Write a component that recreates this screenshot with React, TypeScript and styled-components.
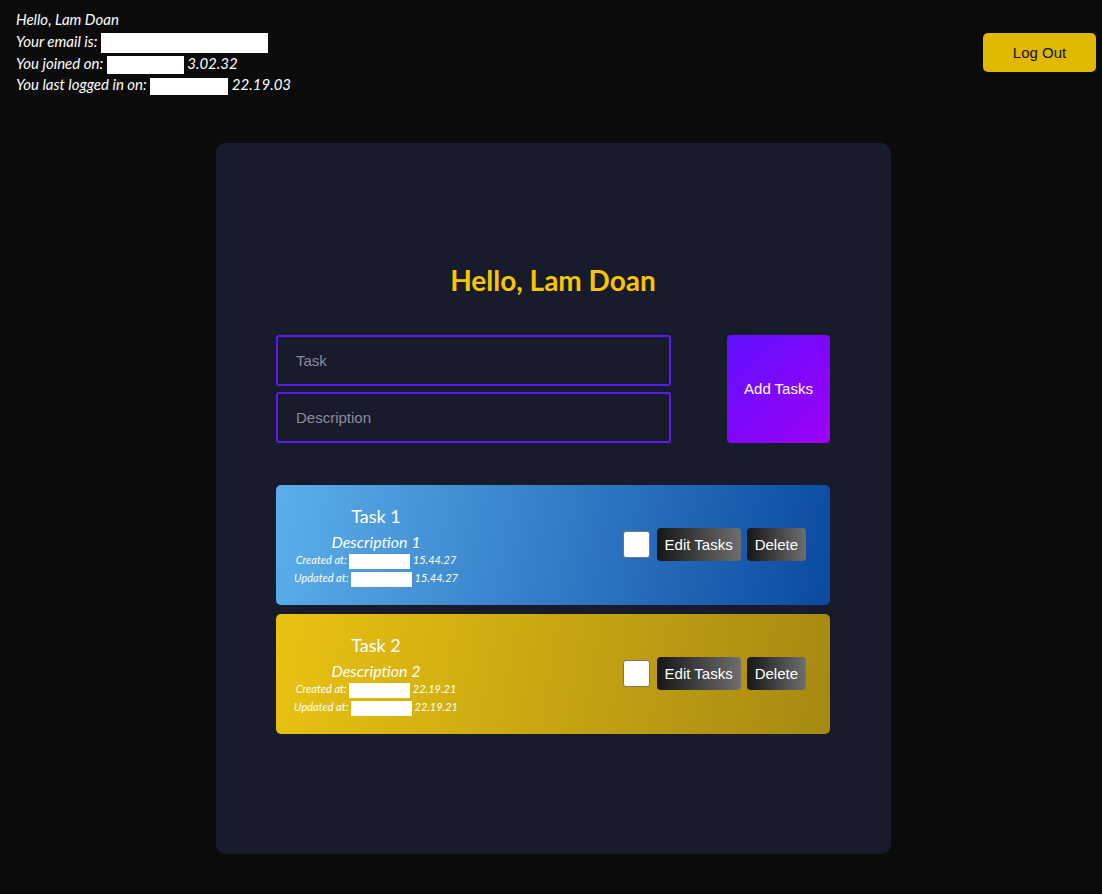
import React from "react";
import styled, { createGlobalStyle } from "styled-components";

const Global = createGlobalStyle`
  html, body { margin: 0; padding: 0; background: #0b0b0b; }
  body { font-family: "Segoe UI", Lato, "Noto Sans", sans-serif; color: #fff; }
  * { box-sizing: border-box; }
`;

const Page = styled.div`
  min-height: 894px;
  background: #0b0b0b;
  display: flex;
  flex-direction: column;
`;

const TopBar = styled.header`
  display: flex;
  justify-content: space-between;
  align-items: flex-start;
  padding: 9px 6px 0 16px;
`;

const UserInfo = styled.div`
  display: flex;
  flex-direction: column;
`;

const InfoLine = styled.p`
  margin: 0;
  font-size: 15px;
  font-style: italic;
  line-height: 21.5px;
  color: #fff;
  white-space: nowrap;
`;

const Redact = styled.span<{ $w: number; $h: number }>`
  display: inline-block;
  width: ${(p) => p.$w}px;
  height: ${(p) => p.$h}px;
  background: #fff;
  vertical-align: middle;
`;

const LogOut = styled.button`
  margin-top: 24px;
  width: 113px;
  height: 39px;
  background: #e0b800;
  border: none;
  border-radius: 5px;
  color: #111;
  font-family: "Liberation Sans", Arial, sans-serif;
  font-size: 15px;
  cursor: pointer;
`;

const Center = styled.main`
  display: flex;
  justify-content: center;
  padding-left: 5px;
  margin-top: 47px;
`;

const Card = styled.section`
  width: 675px;
  height: 711px;
  background: #181b2c;
  border-radius: 10px;
  padding: 2px 61px 0 60px;
  display: flex;
  flex-direction: column;
  justify-content: center;
`;

const Heading = styled.h1`
  margin: 0 0 39px;
  text-align: center;
  color: #f7c600;
  font-size: 28px;
  font-weight: 700;
  line-height: 31px;
`;

const Form = styled.form`
  display: flex;
  gap: 56px;
  margin-bottom: 42px;
`;

const Inputs = styled.div`
  width: 395px;
  display: flex;
  flex-direction: column;
  gap: 6px;
`;

const Field = styled.input`
  height: 51px;
  width: 100%;
  background: #181b2c;
  border: 2px solid #5a1cf2;
  border-radius: 3px;
  padding: 0 18px;
  color: #fff;
  font-family: "Liberation Sans", Arial, sans-serif;
  font-size: 15px;
  outline: none;
  &::placeholder { color: #8a8d99; }
`;

const AddButton = styled.button`
  width: 103px;
  height: 108px;
  border: none;
  border-radius: 4px;
  background: linear-gradient(135deg, #5f10ff 0%, #9e00f4 100%);
  color: #fff;
  font-family: "Liberation Sans", Arial, sans-serif;
  font-size: 15px;
  cursor: pointer;
`;

const TaskList = styled.div`
  display: flex;
  flex-direction: column;
  gap: 9px;
`;

const TaskCard = styled.div<{ $from: string; $to: string }>`
  height: 120px;
  border-radius: 5px;
  background: linear-gradient(100deg, ${(p) => p.$from} 0%, ${(p) => p.$to} 100%);
  display: flex;
  align-items: center;
  justify-content: space-between;
  padding: 0 24px 0 0;
`;

const TaskText = styled.div`
  width: 200px;
  padding-top: 2px;
  display: flex;
  flex-direction: column;
  align-items: center;
  text-align: center;
  color: #fff;
`;

const TaskTitle = styled.div`
  font-size: 18px;
  line-height: 24px;
  margin-bottom: 4px;
`;

const TaskDesc = styled.div`
  font-size: 16px;
  font-style: italic;
  line-height: 19px;
`;

const Meta = styled.div`
  font-size: 11px;
  font-style: italic;
  line-height: 17px;
  white-space: nowrap;
`;

const Actions = styled.div`
  display: flex;
  align-items: center;
  gap: 7px;
`;

const Check = styled.input`
  appearance: none;
  margin: 0;
  width: 27px;
  height: 27px;
  background: #fff;
  border: 1px solid #767676;
  border-radius: 3px;
`;

const Buttons = styled.div`
  display: flex;
  gap: 6px;
`;

const DarkButton = styled.button`
  height: 33px;
  padding: 0 8px;
  border: none;
  border-radius: 4px;
  background: linear-gradient(90deg, #161616 0%, #6e6e6e 100%);
  color: #fff;
  font-family: "Liberation Sans", Arial, sans-serif;
  font-size: 15px;
  cursor: pointer;
`;

const tasks = [
  { title: "Task 1", desc: "Description 1", time: "15.44.27", from: "#5cafeb", to: "#0a4aa1" },
  { title: "Task 2", desc: "Description 2", time: "22.19.21", from: "#e9c211", to: "#a68912" },
];

export default function App() {
  return (
    <Page>
      <Global />
      <TopBar>
        <UserInfo>
          <InfoLine>Hello, Lam Doan</InfoLine>
          <InfoLine>
            Your email is: <Redact $w={167} $h={20} />
          </InfoLine>
          <InfoLine>
            You joined on: <Redact $w={77} $h={18} /> 3.02.32
          </InfoLine>
          <InfoLine>
            You last logged in on: <Redact $w={78} $h={17} /> 22.19.03
          </InfoLine>
        </UserInfo>
        <LogOut>Log Out</LogOut>
      </TopBar>
      <Center>
        <Card>
          <Heading>Hello, Lam Doan</Heading>
          <Form onSubmit={(e) => e.preventDefault()}>
            <Inputs>
              <Field placeholder="Task" />
              <Field placeholder="Description" />
            </Inputs>
            <AddButton type="submit">Add Tasks</AddButton>
          </Form>
          <TaskList>
            {tasks.map((t) => (
              <TaskCard key={t.title} $from={t.from} $to={t.to}>
                <TaskText>
                  <TaskTitle>{t.title}</TaskTitle>
                  <TaskDesc>{t.desc}</TaskDesc>
                  <Meta>
                    Created at: <Redact $w={61} $h={15} /> {t.time}
                  </Meta>
                  <Meta>
                    Updated at: <Redact $w={61} $h={15} /> {t.time}
                  </Meta>
                </TaskText>
                <Actions>
                  <Check type="checkbox" />
                  <Buttons>
                    <DarkButton>Edit Tasks</DarkButton>
                    <DarkButton>Delete</DarkButton>
                  </Buttons>
                </Actions>
              </TaskCard>
            ))}
          </TaskList>
        </Card>
      </Center>
    </Page>
  );
}
